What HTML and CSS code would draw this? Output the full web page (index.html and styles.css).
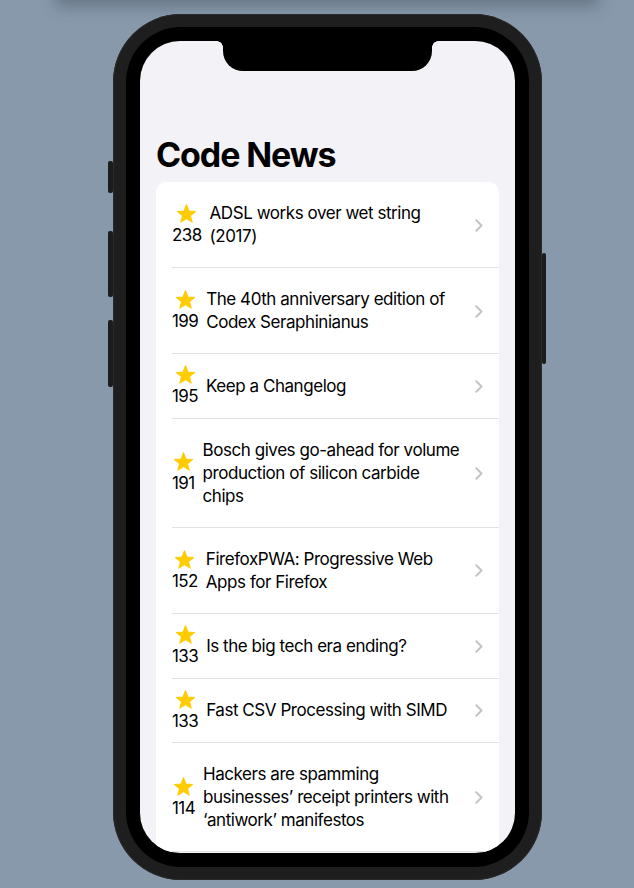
FILE: index.html
```html
<!DOCTYPE html>
<html lang="en">
<head>
<meta charset="utf-8">
<title>Code News</title>
<link rel="stylesheet" href="styles.css">
</head>
<body>
<div class="top-shadow"></div>
<main class="stage">
  <div class="phone">
    <span class="btn btn-mute"></span>
    <span class="btn btn-vol-up"></span>
    <span class="btn btn-vol-down"></span>
    <span class="btn btn-power"></span>
    <div class="bezel">
      <div class="screen">
        <div class="notch"></div>
        <h1 class="large-title">Code News</h1>
        <ul class="list">
          <li class="row">
            <div class="score"><svg class="star" viewBox="0 0 24 24"><polygon points="12,2 14.82,9.12 22.46,9.6 16.56,14.48 18.47,21.9 12,17.8 5.53,21.9 7.44,14.48 1.54,9.6 9.18,9.12"/></svg><span>238</span></div>
            <div class="headline">ADSL works over wet string (2017)</div>
            <svg class="chevron" viewBox="0 0 8 13"><path d="M1.3 1.3 L6.5 6.5 L1.3 11.7"/></svg>
          </li>
          <li class="row">
            <div class="score"><svg class="star" viewBox="0 0 24 24"><polygon points="12,2 14.82,9.12 22.46,9.6 16.56,14.48 18.47,21.9 12,17.8 5.53,21.9 7.44,14.48 1.54,9.6 9.18,9.12"/></svg><span>199</span></div>
            <div class="headline">The 40th anniversary edition of Codex Seraphinianus</div>
            <svg class="chevron" viewBox="0 0 8 13"><path d="M1.3 1.3 L6.5 6.5 L1.3 11.7"/></svg>
          </li>
          <li class="row">
            <div class="score"><svg class="star" viewBox="0 0 24 24"><polygon points="12,2 14.82,9.12 22.46,9.6 16.56,14.48 18.47,21.9 12,17.8 5.53,21.9 7.44,14.48 1.54,9.6 9.18,9.12"/></svg><span>195</span></div>
            <div class="headline">Keep a Changelog</div>
            <svg class="chevron" viewBox="0 0 8 13"><path d="M1.3 1.3 L6.5 6.5 L1.3 11.7"/></svg>
          </li>
          <li class="row">
            <div class="score"><svg class="star" viewBox="0 0 24 24"><polygon points="12,2 14.82,9.12 22.46,9.6 16.56,14.48 18.47,21.9 12,17.8 5.53,21.9 7.44,14.48 1.54,9.6 9.18,9.12"/></svg><span>191</span></div>
            <div class="headline">Bosch gives go-ahead for volume production of silicon carbide chips</div>
            <svg class="chevron" viewBox="0 0 8 13"><path d="M1.3 1.3 L6.5 6.5 L1.3 11.7"/></svg>
          </li>
          <li class="row">
            <div class="score"><svg class="star" viewBox="0 0 24 24"><polygon points="12,2 14.82,9.12 22.46,9.6 16.56,14.48 18.47,21.9 12,17.8 5.53,21.9 7.44,14.48 1.54,9.6 9.18,9.12"/></svg><span>152</span></div>
            <div class="headline">FirefoxPWA: Progressive Web Apps for Firefox</div>
            <svg class="chevron" viewBox="0 0 8 13"><path d="M1.3 1.3 L6.5 6.5 L1.3 11.7"/></svg>
          </li>
          <li class="row">
            <div class="score"><svg class="star" viewBox="0 0 24 24"><polygon points="12,2 14.82,9.12 22.46,9.6 16.56,14.48 18.47,21.9 12,17.8 5.53,21.9 7.44,14.48 1.54,9.6 9.18,9.12"/></svg><span>133</span></div>
            <div class="headline">Is the big tech era ending?</div>
            <svg class="chevron" viewBox="0 0 8 13"><path d="M1.3 1.3 L6.5 6.5 L1.3 11.7"/></svg>
          </li>
          <li class="row">
            <div class="score"><svg class="star" viewBox="0 0 24 24"><polygon points="12,2 14.82,9.12 22.46,9.6 16.56,14.48 18.47,21.9 12,17.8 5.53,21.9 7.44,14.48 1.54,9.6 9.18,9.12"/></svg><span>133</span></div>
            <div class="headline">Fast CSV Processing with SIMD</div>
            <svg class="chevron" viewBox="0 0 8 13"><path d="M1.3 1.3 L6.5 6.5 L1.3 11.7"/></svg>
          </li>
          <li class="row">
            <div class="score"><svg class="star" viewBox="0 0 24 24"><polygon points="12,2 14.82,9.12 22.46,9.6 16.56,14.48 18.47,21.9 12,17.8 5.53,21.9 7.44,14.48 1.54,9.6 9.18,9.12"/></svg><span>114</span></div>
            <div class="headline">Hackers are spamming businesses’ receipt printers with ‘antiwork’ manifestos</div>
            <svg class="chevron" viewBox="0 0 8 13"><path d="M1.3 1.3 L6.5 6.5 L1.3 11.7"/></svg>
          </li>
        </ul>
      </div>
    </div>
  </div>
</main>
</body>
</html>
```
FILE: styles.css
```css
html, body {
  margin: 0;
  padding: 0;
}
body {
  width: 634px;
  height: 888px;
  overflow: hidden;
  background: #8799ab;
  font-family: Inter, "Liberation Sans", sans-serif;
  position: relative;
}
.top-shadow {
  position: absolute;
  top: -40px;
  left: 60px;
  right: 40px;
  height: 40px;
  background: #7a8b9c;
  box-shadow: 0 2px 16px 4px rgba(60, 72, 86, 0.45);
}
.stage {
  display: flex;
  justify-content: flex-start;
  padding-top: 14px;
  padding-left: 113px;
}
.phone {
  position: relative;
  width: 429px;
  height: 866px;
  box-sizing: border-box;
  padding: 13px;
  border-radius: 68px;
  background: #1e1e1e;
  box-shadow: inset 0 0 0 1px #2a2a2a;
}
.btn {
  position: absolute;
  width: 5px;
  background: #1c1c1c;
  border-radius: 2px;
}
.btn-mute { left: -5px; top: 147px; height: 32px; }
.btn-vol-up { left: -5px; top: 217px; height: 66px; }
.btn-vol-down { left: -5px; top: 306px; height: 67px; }
.btn-power { right: -4px; width: 4px; top: 239px; height: 111px; }
.bezel {
  height: 100%;
  box-sizing: border-box;
  padding: 14px;
  border-radius: 55px;
  background: #000;
}
.screen {
  position: relative;
  height: 100%;
  border-radius: 40px;
  overflow: hidden;
  background: #f2f2f7;
}
.notch {
  position: absolute;
  top: 0;
  left: 83px;
  width: 209px;
  height: 30px;
  background: #000;
  border-radius: 0 0 20px 20px;
}
.notch::before, .notch::after {
  content: "";
  position: absolute;
  top: 0;
  width: 6px;
  height: 6px;
  background: radial-gradient(circle at 0 100%, transparent 5.5px, #000 6px);
}
.notch::before { left: -6px; }
.notch::after { right: -6px; background: radial-gradient(circle at 100% 100%, transparent 5.5px, #000 6px); }
.large-title {
  margin: 93px 0 0;
  padding-left: 16px;
  font-size: 34px;
  line-height: 41px;
  font-weight: 700;
  letter-spacing: -1.1px;
  color: #000;
}
.list {
  list-style: none;
  margin: 7px 16px 0;
  padding: 0;
  background: #fff;
  border-radius: 10px;
}
.row {
  position: relative;
  display: flex;
  align-items: center;
  gap: 8px;
  padding: 10.3px 16px 10.3px 16px;
  font-size: 17px;
  line-height: 23px;
  letter-spacing: -0.45px;
  color: #000;
}
.row::after {
  content: "";
  position: absolute;
  left: 16px;
  right: 0;
  bottom: 0;
  height: 1px;
  background: #e2e2e4;
}
.score {
  display: flex;
  flex-direction: column;
  align-items: center;
  gap: 0;
  letter-spacing: -0.6px;
}
.star {
  width: 21px;
  height: 21px;
  fill: #ffcc02;
  stroke: #ffcc02;
  stroke-width: 1.2;
  stroke-linejoin: round;
}
.headline {
  flex: 1;
  padding: 9.75px 4px 9.75px 0;
}
.chevron {
  width: 8px;
  height: 13px;
  fill: none;
  stroke: #c4c4c7;
  stroke-width: 2;
  stroke-linecap: round;
  stroke-linejoin: round;
}
```
